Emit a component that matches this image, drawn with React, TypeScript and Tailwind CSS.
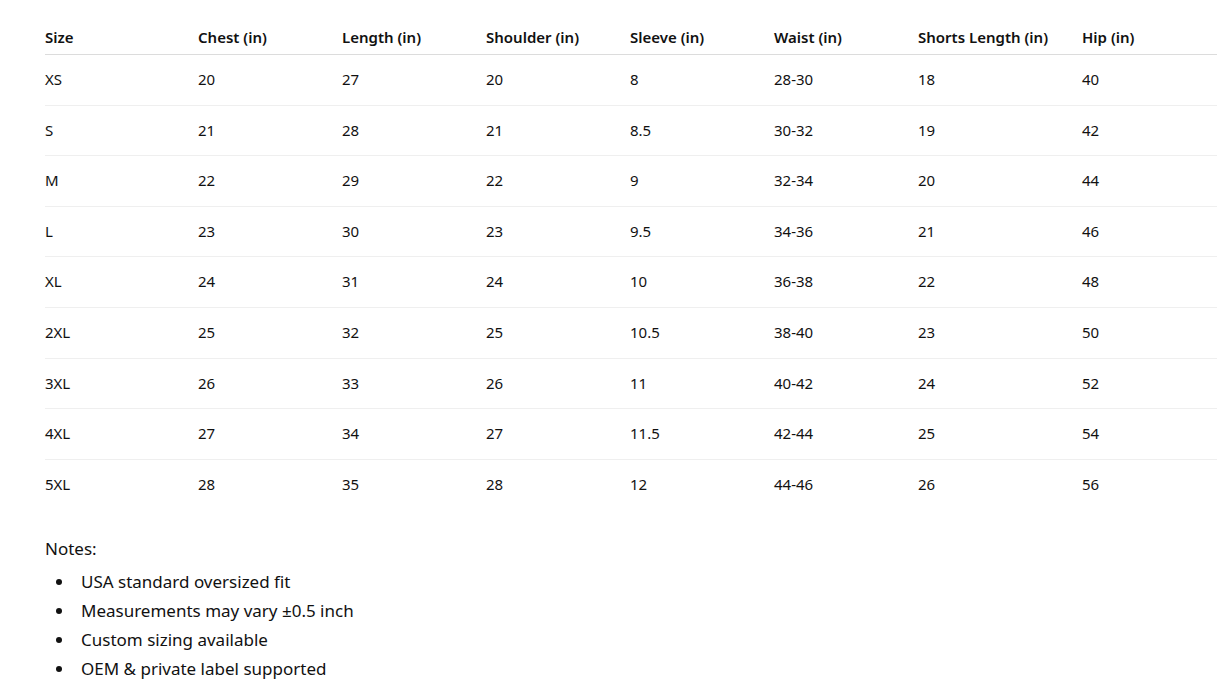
const headers = [
  "Size",
  "Chest (in)",
  "Length (in)",
  "Shoulder (in)",
  "Sleeve (in)",
  "Waist (in)",
  "Shorts Length (in)",
  "Hip (in)",
];

const widths = ["w-[153px]", "w-[144px]", "w-[144px]", "w-[144px]", "w-[144px]", "w-[144px]", "w-[164px]", "w-[135px]"];

const rows = [
  ["XS", "20", "27", "20", "8", "28-30", "18", "40"],
  ["S", "21", "28", "21", "8.5", "30-32", "19", "42"],
  ["M", "22", "29", "22", "9", "32-34", "20", "44"],
  ["L", "23", "30", "23", "9.5", "34-36", "21", "46"],
  ["XL", "24", "31", "24", "10", "36-38", "22", "48"],
  ["2XL", "25", "32", "25", "10.5", "38-40", "23", "50"],
  ["3XL", "26", "33", "26", "11", "40-42", "24", "52"],
  ["4XL", "27", "34", "27", "11.5", "42-44", "25", "54"],
  ["5XL", "28", "35", "28", "12", "44-46", "26", "56"],
];

const notes = [
  "USA standard oversized fit",
  "Measurements may vary ±0.5 inch",
  "Custom sizing available",
  "OEM & private label supported",
];

export default function App() {
  return (
    <div className="min-h-screen bg-white pt-[12px] pl-[45px] pr-[10px] text-[#111] font-['Noto_Sans',sans-serif]">
      {/* size chart */}
      <table className="w-[1172px] table-fixed border-collapse text-left text-[15px]">
        <thead>
          <tr className="border-b border-[#dcdcdc]">
            {headers.map((h, i) => (
              <th key={h} className={`${widths[i]} pt-[14px] pb-[6px] leading-[22px] font-semibold`}>
                {h}
              </th>
            ))}
          </tr>
        </thead>
        <tbody>
          {rows.map((r, ri) => (
            <tr key={r[0]} className={ri < rows.length - 1 ? "border-b border-[#efefef]" : ""}>
              {r.map((c, ci) => (
                <td key={ci} className="py-[14px] leading-[21.6px] font-normal">
                  {c}
                </td>
              ))}
            </tr>
          ))}
        </tbody>
      </table>

      {/* notes */}
      <div className="mt-[25px] text-[17px] leading-[29px]">
        <p className="mb-[4px]">Notes:</p>
        <ul>
          {notes.map((n) => (
            <li key={n} className="flex items-center">
              <span className="ml-[11px] mr-[19px] h-[6px] w-[6px] shrink-0 rounded-full bg-[#111]" />
              <span>{n}</span>
            </li>
          ))}
        </ul>
      </div>
    </div>
  );
}
